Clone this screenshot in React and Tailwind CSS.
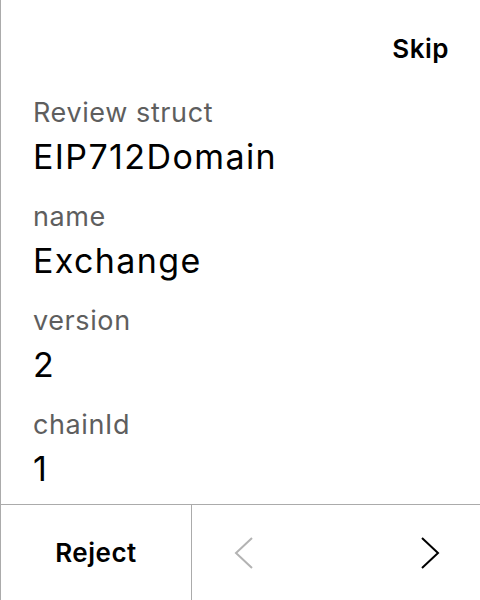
export default function App() {
  const rows = [
    ["Review struct", "EIP712Domain"],
    ["name", "Exchange"],
    ["version", "2"],
    ["chainId", "1"],
  ];
  return (
    <div
      className="w-[480px] h-[600px] flex flex-col bg-white border-l border-[#ababab] text-black"
      style={{ fontFamily: "Inter, 'Liberation Sans', sans-serif" }}
    >
      <div className="h-[96px] flex items-center justify-end pr-[31px]">
        <span className="text-[26px] font-semibold tracking-[0.5px]">Skip</span>
      </div>
      <div className="flex-1 flex flex-col gap-6 pl-[32px] pt-px">
        {rows.map(([k, v]) => (
          <div key={k} className="flex flex-col gap-2">
            <div className="text-[27px] leading-[32px] text-[#5e5e5e] tracking-[0.6px]">{k}</div>
            <div className="text-[34px] leading-[40px] tracking-[1.4px]">{v}</div>
          </div>
        ))}
      </div>
      <div className="h-[96px] border-t border-[#ababab] flex">
        <div className="w-[191px] flex items-center justify-center border-r border-[#ababab]">
          <span className="text-[26px] font-semibold tracking-[0.5px]">Reject</span>
        </div>
        <div className="flex-1 flex items-center justify-between pl-[42px] pr-[40px]">
          <svg width="20" height="32" viewBox="0 0 20 32" fill="none">
            <polyline points="18,1 2,16 18,31" stroke="#b3b3b3" strokeWidth="2" />
          </svg>
          <svg width="20" height="32" viewBox="0 0 20 32" fill="none">
            <polyline points="2,1 18,16 2,31" stroke="#000" strokeWidth="2" />
          </svg>
        </div>
      </div>
    </div>
  );
}
